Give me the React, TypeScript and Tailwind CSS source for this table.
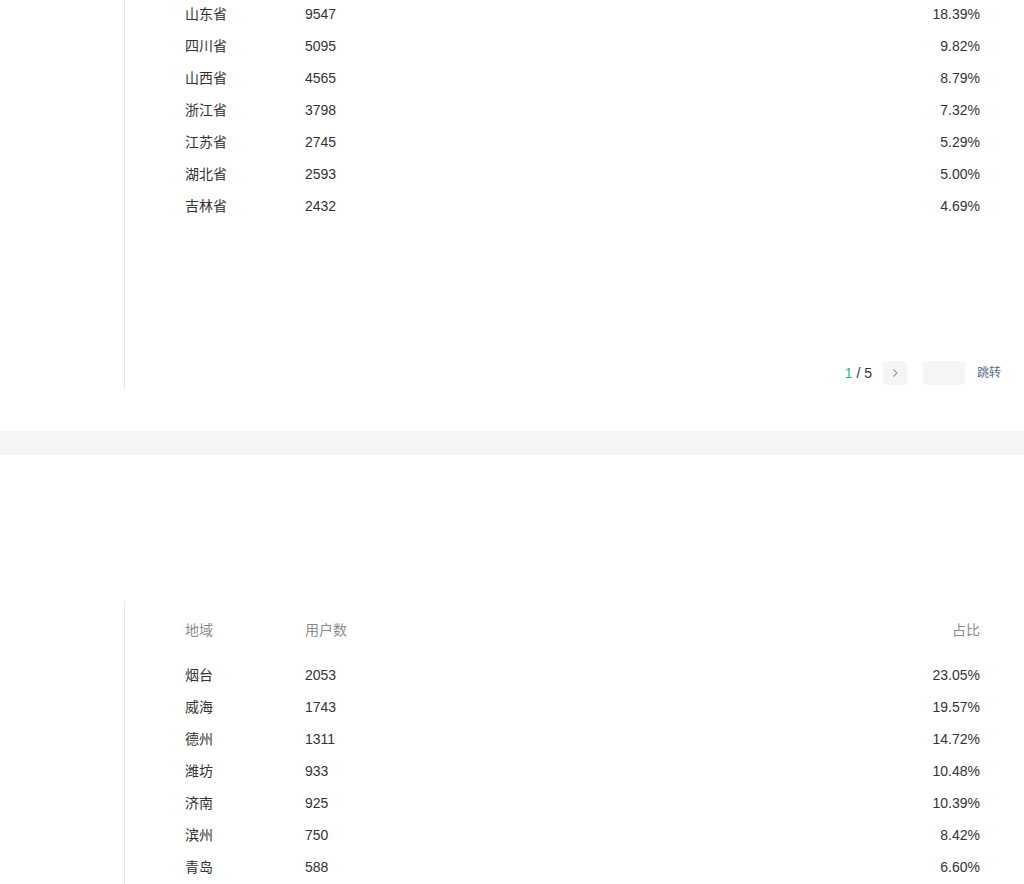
import React from 'react';

const provinces = [
  { name: '山东省', count: 9547, pct: '18.39%' },
  { name: '四川省', count: 5095, pct: '9.82%' },
  { name: '山西省', count: 4565, pct: '8.79%' },
  { name: '浙江省', count: 3798, pct: '7.32%' },
  { name: '江苏省', count: 2745, pct: '5.29%' },
  { name: '湖北省', count: 2593, pct: '5.00%' },
  { name: '吉林省', count: 2432, pct: '4.69%' },
];

const cities = [
  { name: '烟台', count: 2053, pct: '23.05%' },
  { name: '威海', count: 1743, pct: '19.57%' },
  { name: '德州', count: 1311, pct: '14.72%' },
  { name: '潍坊', count: 933, pct: '10.48%' },
  { name: '济南', count: 925, pct: '10.39%' },
  { name: '滨州', count: 750, pct: '8.42%' },
  { name: '青岛', count: 588, pct: '6.60%' },
];

type Row = { name: string; count: number; pct: string };

const TableRow: React.FC<{ row: Row }> = ({ row }) => (
  <div className="flex items-center h-8 text-sm text-[#333]">
    <span className="w-[120px]">{row.name}</span>
    <span>{row.count}</span>
    <span className="ml-auto">{row.pct}</span>
  </div>
);

export default function App() {
  return (
    <div className="bg-white w-[1024px] h-[884px] overflow-hidden" style={{ fontFamily: '"Liberation Sans", "Noto Sans CJK SC", sans-serif' }}>
      <section className="pl-[124px]">
        <div className="border-l border-[#e8e8e8] h-[390px] flex flex-col">
          <div className="-mt-[2px] pl-[60px] pr-[44px]">
            {provinces.map((r) => (
              <TableRow key={r.name} row={r} />
            ))}
          </div>
          <div className="mt-auto mb-[5px] flex items-center justify-end pr-[23px]">
            <span className="text-sm text-[#333]">
              <span className="text-[#19be6b]">1</span> / 5
            </span>
            <button className="ml-[11px] w-6 h-6 rounded-sm bg-[#f4f5f7] flex items-center justify-center">
              <svg width="10" height="10" viewBox="0 0 10 10" fill="none" stroke="#999" strokeWidth="1.1">
                <path d="M3.5 1.5 L7 5 L3.5 8.5" />
              </svg>
            </button>
            <div className="ml-4 w-[42px] h-6 rounded-sm bg-[#f4f5f7]" />
            <span className="ml-3 text-xs text-[#5b6b8c]">跳转</span>
          </div>
        </div>
      </section>
      <div className="h-[41px]" />
      <div className="h-6 bg-[#f4f5f7]" />
      <div className="h-[146px]" />
      <section className="pl-[124px]">
        <div className="border-l border-[#e8e8e8] h-[300px] pt-[13px] pl-[60px] pr-[44px]">
          <div className="flex items-center h-8 text-sm text-[#8c8c8c] mb-[13px]">
            <span className="w-[120px]">地域</span>
            <span>用户数</span>
            <span className="ml-auto">占比</span>
          </div>
          {cities.map((r) => (
            <TableRow key={r.name} row={r} />
          ))}
        </div>
      </section>
    </div>
  );
}
